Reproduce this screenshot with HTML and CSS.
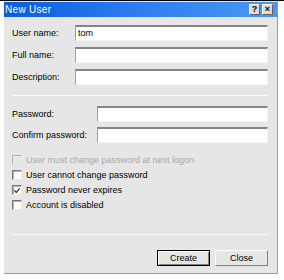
FILE: index.html
```html
<!DOCTYPE html>
<html>
<head>
<meta charset="utf-8">
<link rel="stylesheet" href="styles.css">
</head>
<body>
<div class="edge"></div>
<div class="window">
  <div class="titlebar">
    <span class="title">New User</span>
    <span class="tbtns">
      <span class="tbtn">?</span>
      <span class="tbtn">×</span>
    </span>
  </div>
  <div class="content">
    <div class="grid g1">
      <label class="lbl">User name:</label>
      <div class="input">tom</div>
      <label class="lbl">Full name:</label>
      <div class="input"></div>
      <label class="lbl">Description:</label>
      <div class="input"></div>
    </div>
    <div class="sep sep1"></div>
    <div class="grid g2">
      <label class="lbl">Password:</label>
      <div class="input"></div>
      <label class="lbl">Confirm password:</label>
      <div class="input"></div>
    </div>
    <div class="checks">
      <div class="chk disabled"><span class="box"></span><span>User must change password at next logon</span></div>
      <div class="chk"><span class="box"></span><span>User cannot change password</span></div>
      <div class="chk"><span class="box checked"><svg width="9" height="9" viewBox="0 0 9 9"><path d="M1.5 3.5 L3.5 5.8 L7.5 1.5 L7.5 3 L3.5 7.5 L1.5 5 Z" fill="#000"/></svg></span><span>Password never expires</span></div>
      <div class="chk"><span class="box"></span><span>Account is disabled</span></div>
    </div>
    <div class="spacer"></div>
    <div class="sep sep2"></div>
    <div class="buttons">
      <button class="btn default">Create</button>
      <button class="btn">Close</button>
    </div>
  </div>
</div>
</body>
</html>
```
FILE: styles.css
```css
html, body {
  margin: 0;
  padding: 0;
  background: #ffffff;
  font-family: "Liberation Sans", Arial, sans-serif;
  font-size: 9px;
  color: #000;
}
.edge {
  height: 1px;
  background: #000;
}
.window {
  margin-left: 4px;
  width: 273px;
  height: 272px;
  background: #e6e6e6;
  border-right: 1px solid #9c9c9c;
  border-bottom: 1px solid #9c9c9c;
  display: flex;
  flex-direction: column;
  box-sizing: content-box;
}
.titlebar {
  height: 15px;
  margin-top: 1px;
  background: linear-gradient(to right, #0a5be0 0%, #2f7ef0 50%, #4b98f2 100%);
  display: flex;
  align-items: center;
  justify-content: space-between;
  padding: 0 4px 0 1px;
}
.title {
  color: #fff;
  font-size: 10px;
  letter-spacing: 0.3px;
}
.tbtns {
  display: flex;
  gap: 2px;
}
.tbtn {
  background: #dcdcdc;
  border-top: 1px solid #fff;
  border-left: 1px solid #fff;
  border-right: 1px solid #606060;
  border-bottom: 1px solid #606060;
  font-size: 9px;
  font-weight: bold;
  text-align: center;
  color: #000;
  box-sizing: content-box;
  width: 9px;
  height: 9px;
  line-height: 9px;
}
.content {
  flex: 1;
  display: flex;
  flex-direction: column;
  padding: 8px 9px 7px 8px;
}
.grid {
  display: grid;
  row-gap: 6px;
  align-items: center;
}
.g1 { grid-template-columns: 63px 1fr; }
.g2 { grid-template-columns: 85px 1fr; row-gap: 5px; }
.lbl {
  white-space: nowrap;
}
.input {
  height: 13px;
  background: #fff;
  border-top: 2px solid #858585;
  border-left: 1px solid #a0a0a0;
  border-right: 1px solid #f4f4f4;
  border-bottom: 1px solid #f4f4f4;
  padding-left: 2px;
  line-height: 13px;
  font-size: 9px;
}
.sep {
  height: 1px;
  background: #fafafa;
}
.sep1 { margin: 10px 0 10px 0; }
.checks {
  display: flex;
  flex-direction: column;
  gap: 3px;
  margin-top: 11px;
}
.chk {
  display: flex;
  align-items: center;
  gap: 4px;
  height: 12px;
  white-space: nowrap;
}
.chk.disabled { color: #a8a8a8; }
.box {
  width: 8px;
  height: 8px;
  background: #fff;
  border-top: 1px solid #7a7a7a;
  border-left: 1px solid #7a7a7a;
  border-right: 1px solid #e8e8e8;
  border-bottom: 1px solid #e8e8e8;
  box-shadow: inset 1px 1px 0 #b0b0b0;
  display: flex;
  align-items: center;
  justify-content: center;
}
.chk.disabled .box {
  background: #e6e6e6;
  border-top-color: #b4b4b4;
  border-left-color: #b4b4b4;
  box-shadow: none;
}
.box svg { display: block; }
.spacer { flex: 1; }
.buttons {
  display: flex;
  justify-content: flex-end;
  gap: 5px;
  margin-top: 15px;
}
.btn {
  width: 53px;
  height: 16px;
  padding: 0;
  margin: 0;
  font-family: "Liberation Sans", Arial, sans-serif;
  font-size: 9px;
  color: #000;
  background: #e6e6e6;
  border-top: 1px solid #fff;
  border-left: 1px solid #fff;
  border-right: 1px solid #808080;
  border-bottom: 1px solid #808080;
  box-sizing: border-box;
}
.btn.default {
  border: 1px solid #000;
  box-shadow: inset 1px 1px 0 #fff, inset -1px -1px 0 #808080;
}
```
